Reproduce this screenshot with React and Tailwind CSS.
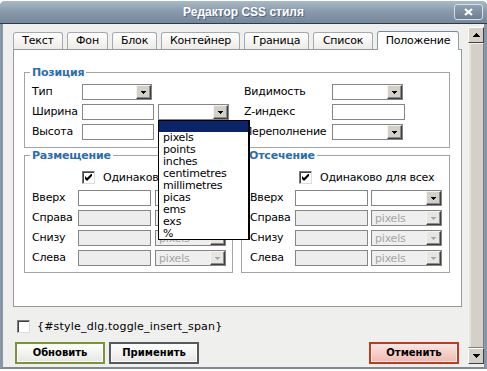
import React from "react";

// маленький треугольник для кнопок выпадающих списков
const SmallTri = ({ color = "#000" }) => (
  <svg width="5" height="3" viewBox="0 0 5 3" shapeRendering="crispEdges">
    <path d="M0 0h5v1H4v1H3v1H2V2H1V1H0z" fill={color} />
  </svg>
);

const ScrollTri = ({ up }) => (
  <svg width="7" height="4" viewBox="0 0 7 4" shapeRendering="crispEdges">
    <path
      d={up ? "M3 0h1v1h1v1h1v1h1v1H0V3h1V2h1V1h1z" : "M0 0h7v1H6v1H5v1H4v1H3V3H2V2H1V1H0z"}
      fill="#000"
    />
  </svg>
);

function DropBtn({ disabled }) {
  return (
    <div
      className={`flex h-[14px] w-[15px] shrink-0 items-center justify-center border border-t-[#f4f3ee] border-l-[#f4f3ee] border-r-[#404040] border-b-[#404040] shadow-[inset_-1px_-1px_0_#8c8c8c] ${
        disabled ? "bg-[#e8e6e0]" : "bg-[#d4d0c8]"
      }`}
    >
      <SmallTri color={disabled ? "#a8a8a8" : "#000"} />
    </div>
  );
}

function Select({ w, value = "", disabled }) {
  return (
    <div
      className={`${w} flex h-[16px] shrink-0 items-center justify-between border border-[#868686] ${
        disabled ? "bg-[#efefef]" : "bg-white"
      }`}
    >
      <span className={`pl-[3px] leading-none ${disabled ? "text-[#a5a5a5]" : ""}`}>{value}</span>
      <DropBtn disabled={disabled} />
    </div>
  );
}

function Input({ w, disabled }) {
  return (
    <div
      className={`${w} h-[16px] shrink-0 border border-[#868686] ${disabled ? "bg-[#ededed]" : "bg-white"}`}
    />
  );
}

function Check({ checked }) {
  return (
    <div className="flex h-[13px] w-[13px] shrink-0 items-center justify-center border border-t-[#7a7a7a] border-l-[#7a7a7a] border-r-[#dcdcdc] border-b-[#dcdcdc] bg-white shadow-[inset_1px_1px_0_#404040]">
      {checked && (
        <svg width="7" height="7" viewBox="0 0 7 7">
          <path d="M0 2L2 4L7 -1V2L2 7L0 5Z" fill="#000" />
        </svg>
      )}
    </div>
  );
}

function Group({ title, className, children }) {
  return (
    <fieldset className={`border border-[#a4a4a4] ${className}`}>
      <legend className="ml-[5px] px-[2px] text-[11px] font-bold leading-[13px] text-[#2c6cb4]">
        {title}
      </legend>
      {children}
    </fieldset>
  );
}

const tabs = [
  { name: "Текст", w: "w-[50px]" },
  { name: "Фон", w: "w-[41px]" },
  { name: "Блок", w: "w-[45px]" },
  { name: "Контейнер", w: "w-[79px]" },
  { name: "Граница", w: "w-[65px]" },
  { name: "Список", w: "w-[60px]" },
  { name: "Положение", w: "w-[82px]", active: true },
];

const units = ["pixels", "points", "inches", "centimetres", "millimetres", "picas", "ems", "exs", "%"];

function SideRows({ labelW, inputW, gap }) {
  const rows = ["Вверх", "Справа", "Снизу", "Слева"];
  return (
    <div className="flex flex-col gap-[4px]">
      {rows.map((r, i) => (
        <div key={r} className="flex h-[16px] items-center">
          <span className={`${labelW} shrink-0`}>{r}</span>
          <Input w={inputW} disabled={i > 0} />
          <div className={gap}>
            <Select w="w-[71px]" value={i > 0 ? "pixels" : ""} disabled={i > 0} />
          </div>
        </div>
      ))}
    </div>
  );
}

export default function App() {
  return (
    <div className="relative h-[371px] w-[487px] overflow-hidden bg-white font-['DejaVu_Sans',sans-serif] text-[11px] leading-[14px] tracking-[-0.2px] text-black">
      <div className="mt-[1px] flex h-[368px] flex-col rounded-t-[5px] border-x-[3px] border-b-[2px] border-x-[#8797a6] border-b-[#7d8a95] bg-[#efefee]">
        {/* заголовок */}
        <div className="-mx-[3px] flex h-[23px] items-center rounded-t-[5px] border-b border-[#2f3a44] bg-gradient-to-b from-[#a9b9c6] via-[#8799aa] to-[#76899b] pl-[33px] pr-[4px]">
          <div className="flex-1 text-center font-['Liberation_Sans',sans-serif] text-[12px] font-bold tracking-[0px] text-white [text-shadow:1px_1px_0_#55657a]">
            Редактор CSS стиля
          </div>
          <div className="flex h-[16px] w-[29px] items-center justify-center rounded-[3px] border border-[#d8e0e7] bg-gradient-to-b from-[#8fa0b0] to-[#6c7f91]">
            <svg width="9" height="8" viewBox="0 0 9 8">
              <path d="M1 1L8 7M8 1L1 7" stroke="#fff" strokeWidth="2.2" />
            </svg>
          </div>
        </div>

        <div className="flex flex-1">
          {/* основная часть */}
          <div className="flex w-[466px] flex-col pl-[10px] pt-[7px]">
            <div className="flex h-[18px] items-end gap-[4px]">
              {tabs.map((t) =>
                t.active ? (
                  <div
                    key={t.name}
                    className={`${t.w} relative z-10 -mb-[1px] flex h-[19px] items-center justify-center rounded-t-[3px] border border-b-0 border-[#919b9c] border-t-[#6f8aa3] bg-white`}
                  >
                    {t.name}
                  </div>
                ) : (
                  <div
                    key={t.name}
                    className={`${t.w} flex h-[17px] items-center justify-center rounded-t-[3px] border border-b-0 border-[#a2aab0] bg-gradient-to-b from-white to-[#ecebe6]`}
                  >
                    {t.name}
                  </div>
                )
              )}
            </div>

            <div className="h-[258px] w-[449px] border border-[#919b9c] bg-white pl-[10px] pt-[16px]">
              <Group title="Позиция" className="w-[426px]">
                <div className="flex pb-[7px] pl-[7px] pt-[5px]">
                  <div className="flex w-[212px] flex-col gap-[4px]">
                    <div className="flex h-[16px] items-center">
                      <span className="w-[50px]">Тип</span>
                      <Select w="w-[70px]" />
                    </div>
                    <div className="flex h-[16px] items-center">
                      <span className="w-[50px]">Ширина</span>
                      <Input w="w-[72px]" />
                      <div className="ml-[4px]">
                        <Select w="w-[71px]" />
                      </div>
                    </div>
                    <div className="flex h-[16px] items-center">
                      <span className="w-[50px]">Высота</span>
                      <Input w="w-[72px]" />
                    </div>
                  </div>
                  <div className="flex flex-col gap-[4px]">
                    <div className="flex h-[16px] items-center">
                      <span className="w-[88px]">Видимость</span>
                      <Select w="w-[71px]" />
                    </div>
                    <div className="flex h-[16px] items-center">
                      <span className="w-[88px]">Z-индекс</span>
                      <Input w="w-[73px]" />
                    </div>
                    <div className="flex h-[16px] items-center">
                      <span className="w-[88px]">Переполнение</span>
                      <Select w="w-[71px]" />
                    </div>
                  </div>
                </div>
              </Group>

              <div className="mt-[1px] flex gap-[8px]">
                <Group title="Размещение" className="w-[209px]">
                  <div className="pb-[6px] pl-[7px] pt-[9px]">
                    <div className="mb-[6px] ml-[50px] flex h-[13px] items-center gap-[8px] leading-[13px]">
                      <Check checked />
                      <span>Одинаково для всех</span>
                    </div>
                    <SideRows labelW="w-[46px]" inputW="w-[73px]" gap="ml-[4px]" />
                  </div>
                </Group>
                <Group title="Отсечение" className="w-[209px]">
                  <div className="pb-[6px] pl-[8px] pt-[9px]">
                    <div className="mb-[6px] ml-[49px] flex h-[13px] items-center gap-[8px] leading-[13px]">
                      <Check checked />
                      <span>Одинаково для всех</span>
                    </div>
                    <SideRows labelW="w-[45px]" inputW="w-[73px]" gap="ml-[3px]" />
                  </div>
                </Group>
              </div>
            </div>

            <div className="ml-[4px] mt-[13px] flex h-[13px] items-center gap-[7px] leading-[13px]">
              <Check />
              <span className="tracking-[0.2px]">{"{#style_dlg.toggle_insert_span}"}</span>
            </div>

            <div className="ml-[2px] mt-[9px] flex w-[444px] items-center text-[10px] font-bold tracking-normal">
              <button className="h-[22px] w-[90px] border-2 border-[#7b9434] bg-gradient-to-b from-white to-[#e6e6e2] shadow-[inset_0_0_0_1px_#fafafa]">
                Обновить
              </button>
              <button className="ml-[4px] h-[22px] w-[90px] border-2 border-[#555a5e] bg-gradient-to-b from-white to-[#e6e6e2] shadow-[inset_0_0_0_1px_#fafafa]">
                Применить
              </button>
              <div className="flex-1" />
              <button className="h-[22px] w-[90px] border-2 border-[#c3391c] bg-gradient-to-b from-[#fbe6e2] to-[#efb9b0] shadow-[inset_0_0_0_1px_#fdf0ee]">
                Отменить
              </button>
            </div>
          </div>

          {/* полоса прокрутки */}
          <div className="flex w-[16px] flex-col pb-[3px] pt-[3px]">
            <div className="flex h-[16px] items-center justify-center border border-t-white border-l-white border-r-[#404040] border-b-[#404040] bg-[#d4d0c8]">
              <ScrollTri up />
            </div>
            <div className="flex-1 border border-t-[#f4f3ee] border-l-[#f4f3ee] border-r-[#808080] border-b-[#808080] bg-[#d4d0c8] shadow-[inset_2px_0_0_#e6e3dc]" />
            <div className="flex h-[16px] items-center justify-center border border-t-white border-l-white border-r-[#404040] border-b-[#404040] bg-[#d4d0c8]">
              <ScrollTri />
            </div>
          </div>
        </div>
      </div>

      {/* раскрытый список единиц */}
      <div className="absolute left-[158px] top-[120px] h-[120px] w-[92px] border border-r-2 border-black bg-white leading-[12px]">
        <div className="h-[11px] bg-[#0a246a]" />
        {units.map((u) => (
          <div key={u} className="h-[12px] pl-[4px]">
            {u}
          </div>
        ))}
      </div>
    </div>
  );
}
